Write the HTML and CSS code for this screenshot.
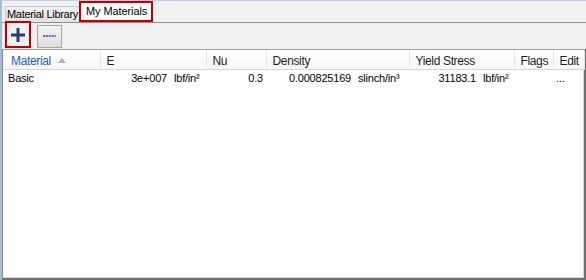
FILE: index.html
```html
<!DOCTYPE html>
<html lang="en">
<head>
    <meta charset="UTF-8">
    <title>My Materials</title>
    <link rel="stylesheet" href="styles.css">
</head>
<body>
    <div class="window">
        <div class="tab-strip">
            <div class="tab">Material Library</div>
            <div class="tab active">My Materials</div>
        </div>

        <div class="toolbar">
            <button class="tool-button add" title="Add">
                <svg width="14" height="14" viewBox="0 0 14 14">
                    <rect x="0" y="5.5" width="14" height="3" fill="#2d3a78"/>
                    <rect x="5.5" y="0" width="3" height="14" fill="#2d3a78"/>
                </svg>
            </button>
            <button class="tool-button remove" title="Remove">
                <span class="dash"></span>
            </button>
        </div>

        <div class="grid">
            <table>
                <colgroup>
                    <col class="col-material">
                    <col class="col-e">
                    <col class="col-nu">
                    <col class="col-density">
                    <col class="col-yield">
                    <col class="col-flags">
                    <col class="col-edit">
                </colgroup>
                <thead>
                    <tr>
                        <th class="sorted">Material <span class="sort-arrow"></span></th>
                        <th>E</th>
                        <th>Nu</th>
                        <th>Density</th>
                        <th>Yield Stress</th>
                        <th>Flags</th>
                        <th>Edit</th>
                    </tr>
                </thead>
                <tbody>
                    <tr>
                        <td class="name">Basic</td>
                        <td><div class="value"><span class="num">3e+007</span><span class="unit unit-e">lbf/in²</span></div></td>
                        <td class="plain">0.3</td>
                        <td><div class="value"><span class="num">0.000825169</span><span class="unit unit-density">slinch/in³</span></div></td>
                        <td><div class="value"><span class="num">31183.1</span><span class="unit unit-yield">lbf/in²</span></div></td>
                        <td></td>
                        <td class="edit">...</td>
                    </tr>
                </tbody>
            </table>
        </div>
    </div>
</body>
</html>
```

FILE: styles.css
```css
body {
    margin: 0;
    padding: 0;
    font-family: "Liberation Sans", Arial, sans-serif;
    font-size: 11px;
    color: #000000;
    background: #f0f0f0;
}
.window {
    width: 586px;
    height: 280px;
    box-sizing: border-box;
    border-top: 1px solid #b9d1ea;
    border-left: 2px solid #a9bcd6;
    display: flex;
    flex-direction: column;
}
.tab-strip {
    height: 21px;
    display: flex;
    align-items: flex-end;
    padding-left: 3px;
    border-bottom: 1px solid #8e9196;
}
.tab {
    height: 15px;
    line-height: 15px;
    padding: 0 1px 0 1px;
    border: 1px solid #c6c8cc;
    border-bottom: none;
    background: linear-gradient(#f2f2f2, #e3e3e3);
    letter-spacing: -0.3px;
}
.tab.active {
    height: 17px;
    line-height: 17px;
    margin-left: -1px;
    margin-bottom: 0;
    padding: 0 4px 0 5px;
    border: 2px solid #c00000;
    background: #ffffff;
    letter-spacing: -0.1px;
}
.toolbar {
    height: 26px;
    display: flex;
    align-items: center;
    gap: 6px;
    padding-left: 3px;
}
.tool-button {
    width: 25px;
    height: 23px;
    padding: 0;
    border: 1px solid #a7a7a7;
    background: linear-gradient(#f4f4f4, #dcdcdc);
    display: flex;
    align-items: center;
    justify-content: center;
    cursor: pointer;
}
.tool-button.add {
    width: 26px;
    height: 27px;
    margin-top: -3px;
    border: 2px solid #c00000;
    background: #f0f0f0;
}
.dash {
    display: block;
    width: 13px;
    height: 2px;
    background: repeating-linear-gradient(90deg, #6f75b4 0 2px, #b8bbe0 2px 3px);
}
.grid {
    flex: 1;
    background: #ffffff;
    border-top: 1px solid #a0a0a0;
    border-left: 1px solid #828790;
    border-right: 2px solid #6d6d6d;
    border-bottom: 2px solid #6d6d6d;
    box-shadow: inset 0 -1px 0 #d6d6d6, inset -1px 0 0 #d6d6d6;
}
table {
    border-collapse: collapse;
    table-layout: fixed;
    width: 581px;
}
.col-material { width: 97px; }
.col-e { width: 106px; }
.col-nu { width: 60px; }
.col-density { width: 143px; }
.col-yield { width: 105px; }
.col-flags { width: 39px; }
.col-edit { width: 31px; }
th {
    height: 17px;
    padding: 2px 0 0 6px;
    text-align: left;
    font-weight: normal;
    font-size: 12px;
    letter-spacing: -0.35px;
    color: #1e1e1e;
    background: linear-gradient(#ffffff, #f6f7f9);
    border-right: 1px solid #e3e5e8;
    border-bottom: 1px solid #d5d5d5;
    white-space: nowrap;
}
th:first-child {
    padding-left: 8px;
}
th.sorted {
    color: #1f5eb8;
}
.sort-arrow {
    display: inline-block;
    margin-left: 4px;
    vertical-align: 2px;
    border-left: 4px solid transparent;
    border-right: 4px solid transparent;
    border-bottom: 5px solid #a9b0b8;
}
td {
    height: 16px;
    padding: 0;
    white-space: nowrap;
    letter-spacing: -0.2px;
}
td.name {
    padding-left: 5px;
}
td.plain {
    text-align: right;
    padding-right: 3px;
}
td.edit {
    padding-left: 3px;
}
.value {
    display: flex;
}
.num {
    flex: 1;
    text-align: right;
}
.unit {
    margin-left: 7px;
}
.unit-e { width: 32px; }
.unit-density { width: 51px; }
.unit-yield { width: 31px; }
```
